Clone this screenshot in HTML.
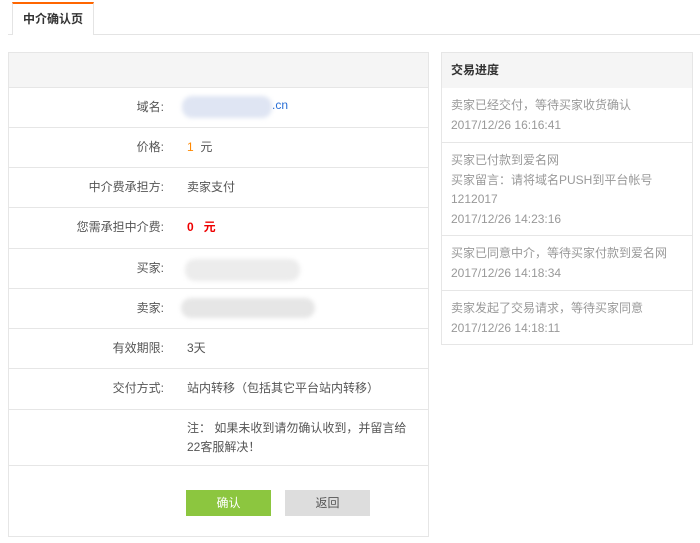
<!DOCTYPE html>
<html><head><meta charset="utf-8"><style>
*{margin:0;padding:0;box-sizing:border-box}
body{width:700px;height:543px;background:#fff;font-family:"Liberation Sans","Noto Sans CJK SC",sans-serif;font-size:12px;color:#555;position:relative;overflow:hidden}
.a{position:absolute}
.tabline{left:8px;top:34px;width:692px;height:1px;background:#e4e4e4}
.tab{left:12px;top:2px;width:82px;height:33px;border:1px solid #e4e4e4;border-top:2px solid #f60;border-bottom:none;background:#fff;font-weight:bold;color:#333;text-align:center;line-height:30px}
.panel{left:8px;top:52px;width:421px;height:485px;border:1px solid #e6e6e6}
.ph{left:0;top:0;width:419px;height:35px;background:#f5f5f5;border-bottom:1px solid #e6e6e6}
.row{left:0;width:419px;border-bottom:1px solid #e6e6e6}
.lab{position:absolute;right:264px;text-align:right;white-space:nowrap}
.val{position:absolute;left:178px;white-space:nowrap}
.rp{left:441px;top:52px;width:252px;height:293px;border:1px solid #e6e6e6}
.rh{height:35px;background:#f5f5f5;font-weight:bold;color:#333;padding-left:9px;line-height:35px}
.it{border-top:1px solid #e6e6e6;padding:8px 9px 0;color:#999;line-height:19.5px}
.blur{position:absolute;border-radius:10px;filter:blur(2px)}
</style></head><body>
<div class="a tabline"></div>
<div class="a tab">中介确认页</div>
<div class="a panel">
<div class="a ph"></div>
<div class="a row" style="top:35px;height:40px"><span class="lab" style="top:10px">域名:</span><div class="blur" style="left:173px;top:8px;width:90px;height:22px;background:#dfe5f3"></div><span class="val" style="left:263px;top:10px;color:#2a6fd6">.cn</span></div>
<div class="a row" style="top:75px;height:40px"><span class="lab" style="top:10px">价格:</span><span class="val" style="top:10px"><span style="color:#f80">1</span>&nbsp; 元</span></div>
<div class="a row" style="top:115px;height:40px"><span class="lab" style="top:10px">中介费承担方:</span><span class="val" style="top:10px">卖家支付</span></div>
<div class="a row" style="top:155px;height:41px"><span class="lab" style="top:10px">您需承担中介费:</span><span class="val" style="top:10px;color:#e00;font-weight:bold">0 &nbsp; 元</span></div>
<div class="a row" style="top:196px;height:40px"><span class="lab" style="top:10px">买家:</span><div class="blur" style="left:176px;top:10px;width:115px;height:22px;background:#ececec"></div></div>
<div class="a row" style="top:236px;height:40px"><span class="lab" style="top:10px">卖家:</span><div class="blur" style="left:172px;top:9px;width:134px;height:20px;background:#e6e6e6"></div></div>
<div class="a row" style="top:276px;height:40px"><span class="lab" style="top:10px">有效期限:</span><span class="val" style="top:10px">3天</span></div>
<div class="a row" style="top:316px;height:41px"><span class="lab" style="top:10px">交付方式:</span><span class="val" style="top:10px">站内转移（包括其它平台站内转移）</span></div>
<div class="a row" style="top:357px;height:56px"><span class="val" style="top:9px;line-height:19px">注： 如果未收到请勿确认收到，并留言给<br>22客服解决！</span></div>
<div class="a" style="left:177px;top:437px;width:85px;height:26px;background:#8cc63f;color:#fff;text-align:center;line-height:26px">确认</div>
<div class="a" style="left:276px;top:437px;width:85px;height:26px;background:#ddd;color:#555;text-align:center;line-height:26px">返回</div>
</div>
<div class="a rp">
<div class="rh">交易进度</div>
<div class="it" style="border-top:none;height:54px">卖家已经交付，等待买家收货确认<br>2017/12/26 16:16:41</div>
<div class="it" style="height:93px">买家已付款到爱名网<br>买家留言：请将域名PUSH到平台帐号<br>1212017<br>2017/12/26 14:23:16</div>
<div class="it" style="height:55px">买家已同意中介，等待买家付款到爱名网<br>2017/12/26 14:18:34</div>
<div class="it" style="height:54px">卖家发起了交易请求，等待买家同意<br>2017/12/26 14:18:11</div>
</div>
</body></html>
